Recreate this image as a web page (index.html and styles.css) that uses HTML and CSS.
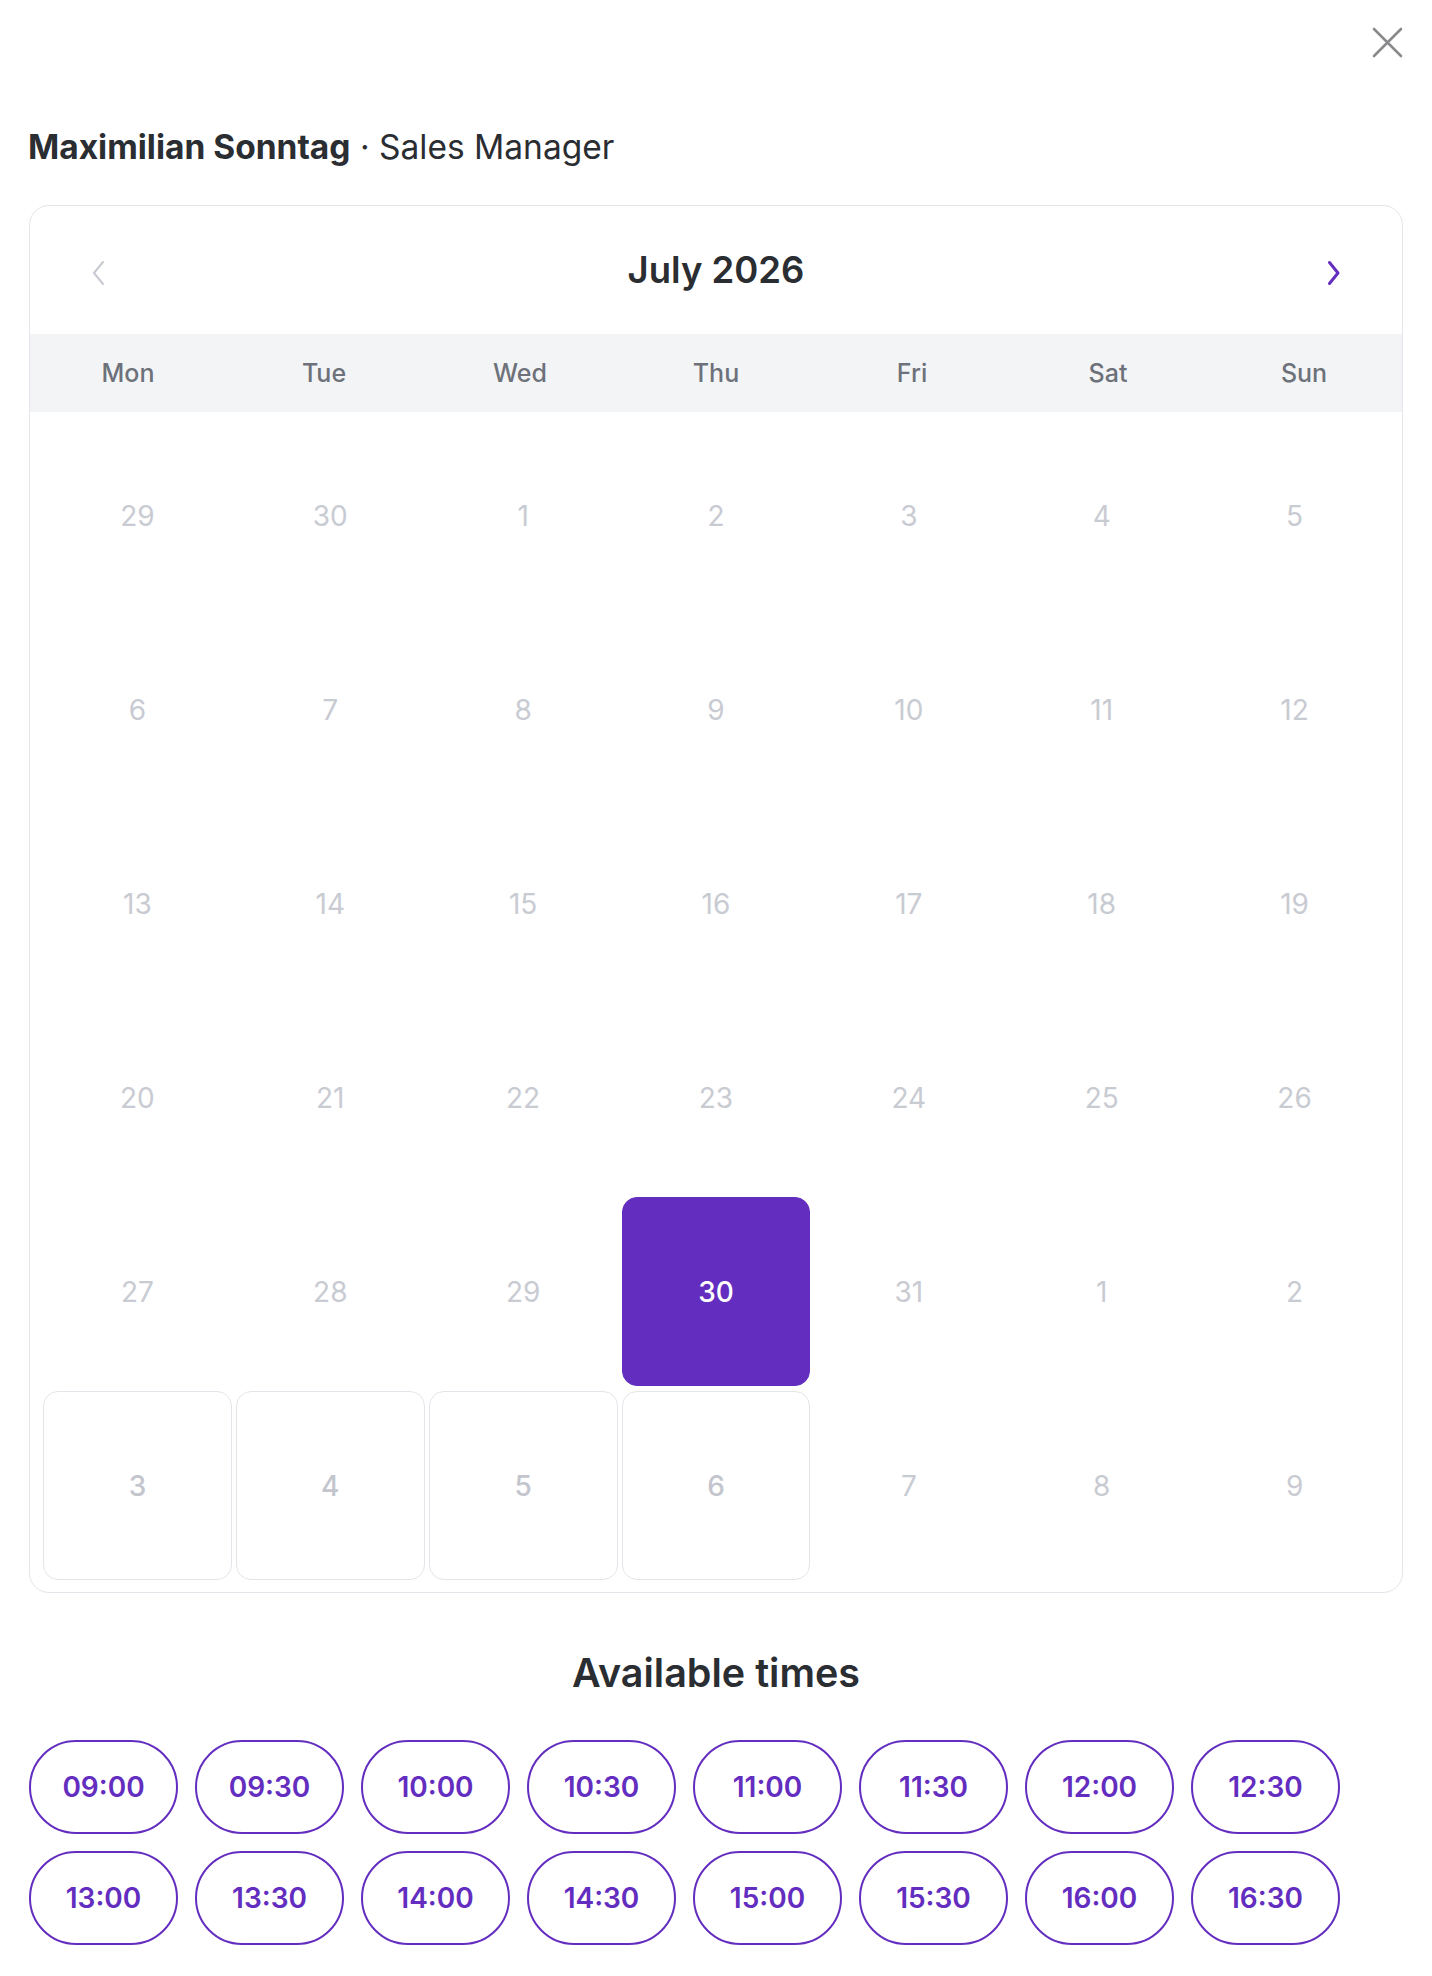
FILE: index.html
```html
<!DOCTYPE html>
<html lang="en">
<head>
<meta charset="utf-8">
<title>Book a meeting</title>
<link rel="stylesheet" href="styles.css">
</head>
<body>
<div class="booking">
  <div class="topbar">
    <button class="close" type="button" aria-label="Close">
      <svg width="31" height="31" viewBox="0 0 31 31" fill="none" stroke="currentColor" stroke-width="2.6" stroke-linecap="round">
        <path d="M2 2 L29 29 M29 2 L2 29"/>
      </svg>
    </button>
  </div>

  <h1 class="person"><strong>Maximilian Sonntag</strong> · Sales Manager</h1>

  <section class="calendar">
    <header class="cal-head">
      <button class="nav nav-prev" type="button" aria-label="Previous month">
        <svg width="14" height="26" viewBox="0 0 14 26" fill="none" stroke="currentColor" stroke-width="2" stroke-linecap="round" stroke-linejoin="round">
          <path d="M12 2 L3 13 L12 24"/>
        </svg>
      </button>
      <div class="month">July 2026</div>
      <button class="nav nav-next" type="button" aria-label="Next month">
        <svg width="14" height="26" viewBox="0 0 14 26" fill="none" stroke="currentColor" stroke-width="3" stroke-linecap="round" stroke-linejoin="round">
          <path d="M2.5 2.5 L11 13 L2.5 23.5"/>
        </svg>
      </button>
    </header>

    <div class="weekdays">
      <span>Mon</span><span>Tue</span><span>Wed</span><span>Thu</span><span>Fri</span><span>Sat</span><span>Sun</span>
    </div>

    <div class="days">
      <div class="day">29</div><div class="day">30</div><div class="day">1</div><div class="day">2</div><div class="day">3</div><div class="day">4</div><div class="day">5</div>
      <div class="day">6</div><div class="day">7</div><div class="day">8</div><div class="day">9</div><div class="day">10</div><div class="day">11</div><div class="day">12</div>
      <div class="day">13</div><div class="day">14</div><div class="day">15</div><div class="day">16</div><div class="day">17</div><div class="day">18</div><div class="day">19</div>
      <div class="day">20</div><div class="day">21</div><div class="day">22</div><div class="day">23</div><div class="day">24</div><div class="day">25</div><div class="day">26</div>
      <div class="day">27</div><div class="day">28</div><div class="day">29</div><div class="day day-selected">30</div><div class="day">31</div><div class="day">1</div><div class="day">2</div>
      <div class="day day-open">3</div><div class="day day-open">4</div><div class="day day-open">5</div><div class="day day-open">6</div><div class="day">7</div><div class="day">8</div><div class="day">9</div>
    </div>
  </section>

  <h2 class="times-title">Available times</h2>

  <div class="slots">
    <button class="slot" type="button">09:00</button>
    <button class="slot" type="button">09:30</button>
    <button class="slot" type="button">10:00</button>
    <button class="slot" type="button">10:30</button>
    <button class="slot" type="button">11:00</button>
    <button class="slot" type="button">11:30</button>
    <button class="slot" type="button">12:00</button>
    <button class="slot" type="button">12:30</button>
    <button class="slot" type="button">13:00</button>
    <button class="slot" type="button">13:30</button>
    <button class="slot" type="button">14:00</button>
    <button class="slot" type="button">14:30</button>
    <button class="slot" type="button">15:00</button>
    <button class="slot" type="button">15:30</button>
    <button class="slot" type="button">16:00</button>
    <button class="slot" type="button">16:30</button>
  </div>
</div>
</body>
</html>
```

FILE: styles.css
```css
* {
  box-sizing: border-box;
}

html, body {
  margin: 0;
  padding: 0;
  background: #ffffff;
}

body {
  font-family: Inter, "Noto Sans", "Liberation Sans", sans-serif;
  color: #2a2d31;
}

button {
  font-family: inherit;
  background: none;
  border: 0;
  padding: 0;
  cursor: pointer;
}

.booking {
  padding: 0 29px;
}

/* close row */
.topbar {
  display: flex;
  justify-content: flex-end;
  padding-top: 27px;
}

.close {
  display: block;
  width: 31px;
  height: 31px;
  color: #8a8a8c;
}

.close svg {
  display: block;
}

/* person line */
.person {
  margin: 69px 0 38px -1px;
  font-size: 33.5px;
  line-height: 40px;
  font-weight: 400;
  color: #2a2d31;
}

.person strong {
  font-weight: 700;
}

/* calendar card */
.calendar {
  border: 1px solid #e4e5ea;
  border-radius: 20px;
  overflow: hidden;
}

.cal-head {
  display: grid;
  grid-template-columns: 40px 1fr 40px;
  align-items: center;
  height: 128px;
  padding: 0 48px;
}

.nav {
  display: flex;
  align-items: center;
  justify-content: center;
  height: 40px;
  margin-top: 6px;
}

.nav svg {
  display: block;
}

.nav-prev {
  color: #c8cad1;
}

.nav-next {
  color: #632dbf;
}

.month {
  text-align: center;
  font-size: 36.5px;
  line-height: 44px;
  font-weight: 600;
  color: #2a2d31;
}

.weekdays {
  display: grid;
  grid-template-columns: repeat(7, 1fr);
  align-items: center;
  height: 78px;
  background: #f3f4f6;
}

.weekdays span {
  text-align: center;
  font-size: 25px;
  line-height: 32px;
  font-weight: 500;
  color: #6d717a;
}

.days {
  display: grid;
  grid-template-columns: repeat(7, 1fr);
  grid-auto-rows: 189px;
  gap: 5px 4px;
  padding: 9px 13px 12px;
}

.day {
  display: flex;
  align-items: center;
  justify-content: center;
  border: 1px solid transparent;
  border-radius: 15px;
  font-size: 28px;
  font-weight: 400;
  color: #c9cbd2;
}

.day-open {
  border-color: #e4e5ea;
  font-weight: 500;
  color: #c3c5cd;
}

.day-selected {
  background: #632dbf;
  border-color: #632dbf;
  color: #ffffff;
  font-weight: 500;
}

/* times */
.times-title {
  margin: 58px 0 45px;
  text-align: center;
  font-size: 39.5px;
  line-height: 44px;
  font-weight: 600;
  color: #2a2d31;
}

.slots {
  display: flex;
  flex-wrap: wrap;
  gap: 17px 17px;
}

.slot {
  width: 149px;
  height: 94px;
  border: 2px solid #632dbf;
  border-radius: 47px;
  font-size: 28px;
  font-weight: 600;
  color: #632dbf;
}
```
